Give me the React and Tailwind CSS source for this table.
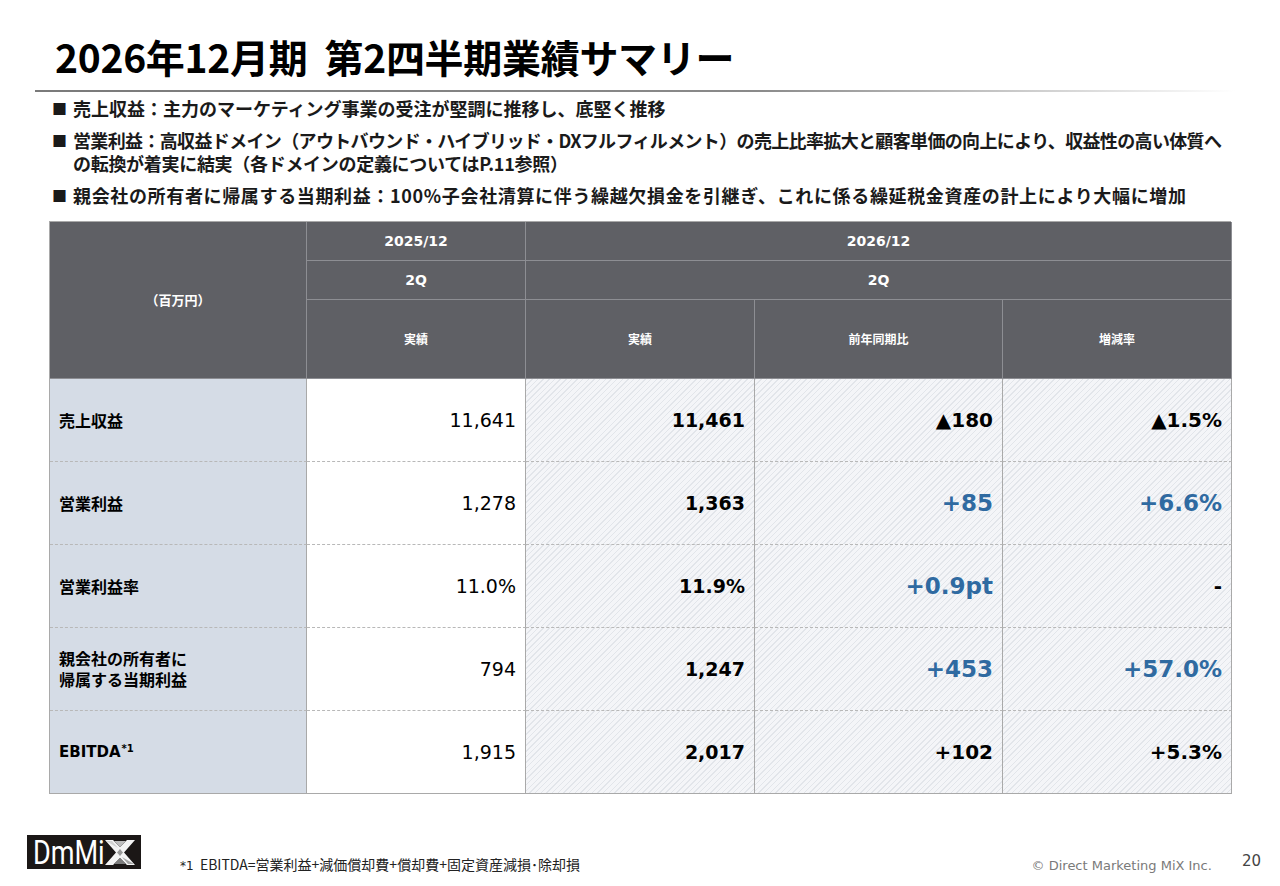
const jp = { fontFamily: '"Noto Sans CJK JP", "Noto Sans", sans-serif' };
const num = { fontFamily: '"DejaVu Sans", Verdana, "Noto Sans CJK JP", sans-serif' };

const rows = [
  { label: ['売上収益'], prev: '11,641', cur: '11,461', diff: '▲180', rate: '▲1.5%' },
  { label: ['営業利益'], prev: '1,278', cur: '1,363', diff: '+85', rate: '+6.6%', blue: true },
  { label: ['営業利益率'], prev: '11.0%', cur: '11.9%', diff: '+0.9pt', rate: '-', blue: true },
  { label: ['親会社の所有者に', '帰属する当期利益'], prev: '794', cur: '1,247', diff: '+453', rate: '+57.0%', blue: true },
  { label: ['EBITDA'], sup: '*1', prev: '1,915', cur: '2,017', diff: '+102', rate: '+5.3%' },
];

const hatch =
  'bg-[image:repeating-linear-gradient(135deg,#e2e5ea_0px,#e2e5ea_1px,#f4f5f8_1px,#f4f5f8_4px)]';

const Bullet = ({ children }) => (
  <div className="flex text-[18px] leading-[23px] font-bold text-[#1a1a1a]">
    <span className="w-[21px] shrink-0 text-[15px]">■</span>
    <div className="whitespace-nowrap flex flex-col">{children}</div>
  </div>
);

const Logo = () => (
  <div className="w-[114px] h-[34px] bg-[#1b1716] flex items-center pl-[6px]">
    <span className="w-[72px] overflow-visible">
      <span
        className="inline-block text-white text-[33px] leading-none scale-x-[0.82] origin-left"
        style={{ fontFamily: 'Roboto, "Liberation Sans", sans-serif' }}
      >
        DmMi
      </span>
    </span>
    <svg width="30" height="25" viewBox="0 0 30 25">
      <polygon points="0,0 8,0 15,7 22,0 30,0 19,12.5 30,25 22,25 15,18 8,25 0,25 11,12.5" fill="#f4f4f4" />
      <polygon points="9,1 21,1 15,7" fill="#bdbdbd" />
      <polygon points="9,24 21,24 15,18" fill="#7d7d7d" />
      <polygon points="12,12.5 15,9 18,12.5 15,16" fill="#9a9a9a" />
      <polygon points="1,1 7,1 13,8" fill="#d2d2d2" />
      <polygon points="23,24 29,24 17,17" fill="#a5a5a5" />
    </svg>
  </div>
);

export default function App() {
  const head = 'bg-[#5f6065] text-white font-bold flex items-center justify-center border-r border-b border-[#8d8e93]';
  const body = 'border-r border-b border-[#a9a9a9]';

  return (
    <div className="w-[1280px] h-[886px] bg-white flex flex-col overflow-hidden" style={jp}>
      <h1 className="ml-[55px] mt-[32px] text-[39px] leading-[49px] font-bold text-black tracking-[-0.3px]">
        2026年12月期&nbsp; 第2四半期業績サマリー
      </h1>
      <div className="ml-[35px] mt-[9px] w-[1200px] h-[2px] bg-[linear-gradient(90deg,#7a7a7a_0%,#8a8a8a_60%,#ffffff_100%)]" />

      <div className="ml-[52px] mt-[5px] flex flex-col gap-[9px]">
        <Bullet>
          <span>売上収益：主力のマーケティング事業の受注が堅調に推移し、底堅く推移</span>
        </Bullet>
        <Bullet>
          <span className="tracking-[-0.65px]">
            営業利益：高収益ドメイン（アウトバウンド・ハイブリッド・DXフルフィルメント）の売上比率拡大と顧客単価の向上により、収益性の高い体質へ
          </span>
          <span className="tracking-[-0.3px]">の転換が着実に結実（各ドメインの定義についてはP.11参照）</span>
        </Bullet>
        <Bullet>
          <span className="tracking-[0.65px]">
            親会社の所有者に帰属する当期利益：100%子会社清算に伴う繰越欠損金を引継ぎ、これに係る繰延税金資産の計上により大幅に増加
          </span>
        </Bullet>
      </div>

      <div className="ml-[49px] mt-[14px] w-[1182px] grid grid-cols-[257px_219px_229px_248px_229px] grid-rows-[39px_39px_79px_repeat(5,83px)] border-l border-t border-[#a9a9a9]">
        <div className={`${head} row-span-3 text-[13px]`}>（百万円）</div>
        <div className={`${head} text-[14px]`} style={num}>2025/12</div>
        <div className={`${head} col-span-3 text-[14px]`} style={num}>2026/12</div>
        <div className={`${head} text-[14px]`} style={num}>2Q</div>
        <div className={`${head} col-span-3 text-[14px]`} style={num}>2Q</div>
        <div className={`${head} text-[12px]`}>実績</div>
        <div className={`${head} text-[12px]`}>実績</div>
        <div className={`${head} text-[12px]`}>前年同期比</div>
        <div className={`${head} text-[12px]`}>増減率</div>

        {rows.map((r, i) => {
          const last = i === rows.length - 1;
          const rowLine = last ? '' : '[border-bottom-style:dashed] border-b-[#b8b8b8]';
          const valColor = r.blue ? 'text-[#2f6aa1] text-[23px]' : 'text-black text-[20px]';
          return [
            <div key={`l${i}`} className={`${body} ${rowLine} bg-[#d5dce6] flex flex-col justify-center pl-[9px] text-[16px] leading-[21px] font-bold text-black`}>
              {r.label.map((t) => (
                <span key={t} style={r.sup ? num : undefined} className={r.sup ? 'text-[15px]' : ''}>
                  {t}
                  {r.sup && <sup className="text-[10px] ml-[1px]">{r.sup}</sup>}
                </span>
              ))}
            </div>,
            <div key={`p${i}`} className={`${body} ${rowLine} bg-white flex items-center justify-end pr-[9px] text-[19px] text-black`} style={num}>
              {r.prev}
            </div>,
            <div key={`c${i}`} className={`${body} ${rowLine} ${hatch} flex items-center justify-end pr-[9px] text-[19px] font-bold text-black`} style={num}>
              {r.cur}
            </div>,
            <div key={`d${i}`} className={`${body} ${rowLine} ${hatch} flex items-center justify-end pr-[9px] font-bold ${valColor}`} style={num}>
              {r.diff}
            </div>,
            <div key={`r${i}`} className={`${body} ${rowLine} ${hatch} flex items-center justify-end pr-[9px] font-bold ${r.rate === '-' ? 'text-black text-[20px]' : valColor}`} style={num}>
              {r.rate}
            </div>,
          ];
        })}
      </div>

      <div className="mt-[41px] ml-[27px] flex items-end">
        <Logo />
        <div className="ml-[39px] mb-[-6px] text-[14px] text-[#222]" style={jp}>
          <span style={num} className="text-[12px]">*1</span>&nbsp; EBITDA=営業利益+減価償却費+償却費+固定資産減損･除却損
        </div>
        <div className="ml-auto mb-[-6px] text-[13px] text-[#7a7a7a]" style={num}>© Direct Marketing MiX Inc.</div>
        <div className="ml-[30px] mr-[19px] mb-[-3px] text-[15px] text-[#444]" style={num}>20</div>
      </div>
    </div>
  );
}
